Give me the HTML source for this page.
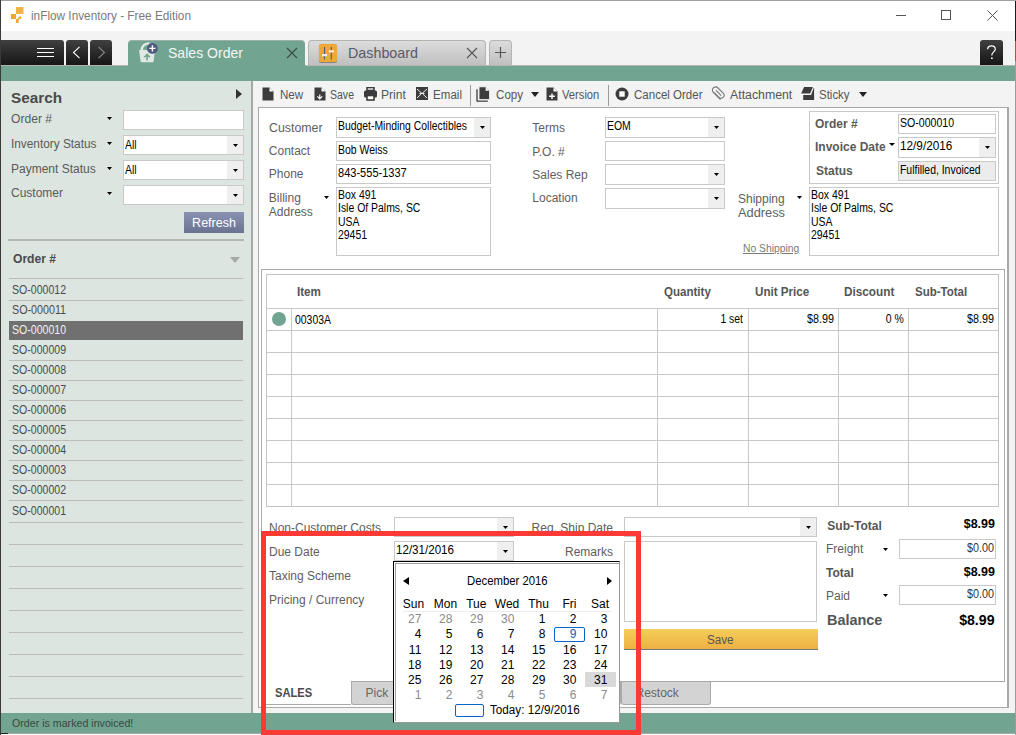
<!DOCTYPE html>
<html><head><meta charset="utf-8"><style>
html,body{margin:0;padding:0;}
body{width:1016px;height:735px;position:relative;overflow:hidden;background:#f3f3f3;font-family:"Liberation Sans", sans-serif;}
body>div,body>span,body>svg{position:absolute;}
span{white-space:nowrap;display:block;}
</style></head><body>
<div style="left:0px;top:0px;width:1016px;height:31px;background:#fff;"></div>
<div style="left:0px;top:0px;width:1016px;height:1px;background:#a0a0a0;"></div>
<svg style="left:10px;top:6px;" width="16" height="18" viewBox="0 0 16 18"><rect x="6" y="1" width="7.5" height="7" fill="#f2b446"/><rect x="1" y="8" width="5" height="5" fill="#eea533"/><rect x="6" y="13" width="2.6" height="4" fill="#eea533"/><path d="M6 8.5 L6 13 L8.6 13 L10.5 11" stroke="#eea533" stroke-width="0" fill="none"/><circle cx="10" cy="11.5" r="1.3" fill="#eea533"/><path d="M7.3 14 L10 11.5" stroke="#eea533" stroke-width="1.6"/></svg>
<span id="t0" style="left:31px;top:9.84px;font-size:12px;line-height:12px;color:#7a7a7a;font-weight:400;transform:scale(0.983,1.000);transform-origin:left center;">inFlow Inventory - Free Edition</span>
<div style="left:896px;top:15px;width:10px;height:1px;background:#555;"></div>
<div style="left:941px;top:10px;width:10px;height:10px;border:1px solid #555;box-sizing:border-box;"></div>
<svg style="left:987px;top:10px;" width="11" height="11" viewBox="0 0 11 11"><path d="M0.5 0.5L10.5 10.5M10.5 0.5L0.5 10.5" stroke="#555" stroke-width="1"/></svg>
<div style="left:0px;top:31px;width:1016px;height:35px;background:#f3f3f3;"></div>
<div style="left:1px;top:40px;width:63px;height:25px;background:linear-gradient(#404040,#2a2a2a 50%,#161616);border-radius:0 3px 0 0;"></div>
<div style="left:66px;top:40px;width:22px;height:25px;background:linear-gradient(#404040,#2a2a2a 50%,#161616);border-radius:3px 3px 0 0;"></div>
<div style="left:90px;top:40px;width:22px;height:25px;background:linear-gradient(#404040,#2a2a2a 50%,#161616);border-radius:3px 3px 0 0;"></div>
<div style="left:37px;top:48px;width:17px;height:1.4px;background:#fff;"></div>
<div style="left:37px;top:52px;width:17px;height:1.4px;background:#fff;"></div>
<div style="left:37px;top:56px;width:17px;height:1.4px;background:#fff;"></div>
<svg style="left:72px;top:46px;" width="9" height="13" viewBox="0 0 9 13"><path d="M7.5 0.8L1.5 6.5L7.5 12.2" stroke="#fff" stroke-width="1.1" fill="none"/></svg>
<svg style="left:97px;top:46px;" width="9" height="13" viewBox="0 0 9 13"><path d="M1.5 0.8L7.5 6.5L1.5 12.2" stroke="#8a8a8a" stroke-width="1.1" fill="none"/></svg>
<div style="left:980px;top:40px;width:23px;height:25px;background:linear-gradient(#404040,#2a2a2a 50%,#161616);border-radius:3px 3px 0 0;"></div>
<svg style="left:986px;top:45px;" width="11" height="15" viewBox="0 0 11 15"><path d="M1.6 4.2C1.6 2.2 3.3 0.8 5.4 0.8C7.6 0.8 9.3 2.2 9.3 4.2C9.3 6.6 5.9 7.2 5.9 9.8V10.6" stroke="#fff" stroke-width="1.2" fill="none"/><circle cx="5.9" cy="13.2" r="0.9" fill="#fff"/></svg>
<div style="left:0px;top:65px;width:1016px;height:1px;background:#b4b4b4;"></div>
<div style="left:0px;top:66px;width:1016px;height:15px;background:#71a591;"></div>
<div style="left:128px;top:40px;width:177px;height:26px;background:#71a591;border-radius:4px 4px 0 0;border-top:1px solid #9fb0a8;box-sizing:border-box;"></div>
<svg style="left:138px;top:42px;" width="24" height="22" viewBox="0 0 24 22"><path d="M3.6 8.5C3.8 3.5 7.5 1.2 11.5 1.6" stroke="#dfe8e2" stroke-width="2.4" fill="none"/>
<path d="M1 8 H17.2 L15.6 19.2 Q15.4 20.2 14.4 20.2 H3.8 Q2.8 20.2 2.6 19.2 Z" fill="#dfe8e2"/>
<path d="M9.1 18.2V12.6 M6.4 15.2 L9.1 12.4 L11.8 15.2" stroke="#71a591" stroke-width="1.6" fill="none"/>
<circle cx="14.4" cy="6.4" r="5.4" fill="#4f5a80"/>
<path d="M14.4 3.3V9.5 M11.3 6.4H17.5" stroke="#fff" stroke-width="1.4"/></svg>
<span id="t1" style="left:168px;top:45.00px;font-size:15px;line-height:15px;color:#f4f7f5;font-weight:400;transform:scale(0.937,1.000);transform-origin:left center;">Sales Order</span>
<svg style="left:286px;top:47px;" width="12" height="12" viewBox="0 0 12 12"><path d="M1 1L11 11M11 1L1 11" stroke="#3d4a44" stroke-width="1.1"/></svg>
<div style="left:308px;top:40px;width:178px;height:25px;background:linear-gradient(#dcdcdc,#c0c0c0);border:1px solid #b4b4b4;border-bottom:none;box-sizing:border-box;border-radius:4px 4px 0 0;"></div>
<div style="left:319px;top:44px;width:18px;height:18px;background:#efa838;border-radius:2.5px;box-shadow:0 0.6px 0.8px rgba(0,0,0,0.35);"></div>
<svg style="left:319px;top:44px;" width="18" height="18" viewBox="0 0 18 18"><path d="M5.5 3V15.6M12.3 3V15.6" stroke="#4d5b7e" stroke-width="1.1"/><rect x="3" y="10" width="5.2" height="2.2" rx="0.6" fill="#f7f0de"/><rect x="9.8" y="6.2" width="5.2" height="2.2" rx="0.6" fill="#f7f0de"/></svg>
<span id="t2" style="left:348px;top:45.30px;font-size:15px;line-height:15px;color:#5a5a66;font-weight:400;transform:scale(0.954,1.000);transform-origin:left center;">Dashboard</span>
<svg style="left:466px;top:47px;" width="12" height="12" viewBox="0 0 12 12"><path d="M1 1L11 11M11 1L1 11" stroke="#555" stroke-width="1.1"/></svg>
<div style="left:489px;top:40px;width:23px;height:25px;background:linear-gradient(#dcdcdc,#c0c0c0);border:1px solid #b4b4b4;border-bottom:none;box-sizing:border-box;border-radius:4px 4px 0 0;"></div>
<svg style="left:494px;top:46px;" width="13" height="13" viewBox="0 0 13 13"><path d="M6.5 1V12M1 6.5H12" stroke="#555" stroke-width="1.2"/></svg>
<div style="left:0px;top:81px;width:252px;height:632px;background:#dce5df;"></div>
<div style="left:251px;top:81px;width:2px;height:632px;background:#a4a8a6;"></div>
<span id="t3" style="left:11px;top:89.90px;font-size:15px;line-height:15px;color:#4a4a4a;font-weight:700;transform:scale(1.019,1.000);transform-origin:left center;">Search</span>
<svg style="left:236px;top:89px;" width="6" height="10" viewBox="0 0 6 10"><path d="M0 0L6 5L0 10Z" fill="#333"/></svg>
<span id="t4" style="left:11px;top:112.84px;font-size:12px;line-height:12px;color:#5a5a5a;font-weight:400;transform:scale(1.008,1.000);transform-origin:left center;">Order #</span>
<svg style="left:107.0px;top:117px;" width="5" height="3" viewBox="0 0 5 3"><path d="M0 0H5L2.5 3Z" fill="#000"/></svg>
<span id="t5" style="left:11px;top:137.84px;font-size:12px;line-height:12px;color:#5a5a5a;font-weight:400;transform:scale(0.985,1.000);transform-origin:left center;">Inventory Status</span>
<svg style="left:107.0px;top:142px;" width="5" height="3" viewBox="0 0 5 3"><path d="M0 0H5L2.5 3Z" fill="#000"/></svg>
<span id="t6" style="left:11px;top:162.84px;font-size:12px;line-height:12px;color:#5a5a5a;font-weight:400;">Payment Status</span>
<svg style="left:107.0px;top:167px;" width="5" height="3" viewBox="0 0 5 3"><path d="M0 0H5L2.5 3Z" fill="#000"/></svg>
<span id="t7" style="left:11px;top:187.44px;font-size:12px;line-height:12px;color:#5a5a5a;font-weight:400;">Customer</span>
<svg style="left:107.0px;top:191.6px;" width="5" height="3" viewBox="0 0 5 3"><path d="M0 0H5L2.5 3Z" fill="#000"/></svg>
<div style="left:123px;top:110px;width:121px;height:20px;background:#fff;border:1px solid #c9c9c9;box-sizing:border-box;"></div>
<div style="left:123px;top:135px;width:121px;height:20px;background:#fff;border:1px solid #c9c9c9;box-sizing:border-box;"></div>
<div style="left:227px;top:136px;width:16px;height:18px;background:#efefef;"></div>
<svg style="left:233.0px;top:143.5px;" width="5" height="3" viewBox="0 0 5 3"><path d="M0 0H5L2.5 3Z" fill="#000"/></svg>
<div style="left:123px;top:160px;width:121px;height:20px;background:#fff;border:1px solid #c9c9c9;box-sizing:border-box;"></div>
<div style="left:227px;top:161px;width:16px;height:18px;background:#efefef;"></div>
<svg style="left:233.0px;top:168.5px;" width="5" height="3" viewBox="0 0 5 3"><path d="M0 0H5L2.5 3Z" fill="#000"/></svg>
<div style="left:123px;top:185px;width:121px;height:20px;background:#fff;border:1px solid #c9c9c9;box-sizing:border-box;"></div>
<div style="left:227px;top:186px;width:16px;height:18px;background:#efefef;"></div>
<svg style="left:233.0px;top:193.5px;" width="5" height="3" viewBox="0 0 5 3"><path d="M0 0H5L2.5 3Z" fill="#000"/></svg>
<span id="t8" style="left:125px;top:139.34px;font-size:12px;line-height:12px;color:#000;font-weight:400;transform:scale(0.870,1.000);transform-origin:left center;">All</span>
<span id="t9" style="left:125px;top:164.34px;font-size:12px;line-height:12px;color:#000;font-weight:400;transform:scale(0.870,1.000);transform-origin:left center;">All</span>
<div style="left:184px;top:212px;width:60px;height:21px;background:linear-gradient(#8a93b3,#69728f);"></div>
<span id="t10" style="left:192.11px;top:216.92px;font-size:12.5px;line-height:12.5px;color:#fff;font-weight:400;transform-origin:left center;">Refresh</span>
<div style="left:8px;top:239px;width:236px;height:2px;background:#b5b9b6;"></div>
<span id="t11" style="left:13px;top:253.44px;font-size:12px;line-height:12px;color:#4a4a4a;font-weight:700;transform:scale(1.007,1.000);transform-origin:left center;">Order #</span>
<svg style="left:230px;top:257px;" width="10" height="6" viewBox="0 0 10 6"><path d="M0 0H10L5 6Z" fill="#a5a9a7"/></svg>
<div style="left:9px;top:278px;width:234px;height:1px;background:#bcbcba;"></div>
<span id="t12" style="left:12px;top:283.84px;font-size:12px;line-height:12px;color:#4a4a4a;font-weight:400;transform:scale(0.880,1.000);transform-origin:left center;">SO-000012</span>
<div style="left:9px;top:300px;width:234px;height:1px;background:#bcbcba;"></div>
<span id="t13" style="left:12px;top:303.84px;font-size:12px;line-height:12px;color:#4a4a4a;font-weight:400;transform:scale(0.893,1.000);transform-origin:left center;">SO-000011</span>
<div style="left:9px;top:321px;width:234px;height:19px;background:#707070;"></div>
<span id="t14" style="left:12px;top:323.84px;font-size:12px;line-height:12px;color:#f2f2f2;font-weight:400;transform:scale(0.880,1.000);transform-origin:left center;">SO-000010</span>
<span id="t15" style="left:12px;top:343.84px;font-size:12px;line-height:12px;color:#4a4a4a;font-weight:400;transform:scale(0.880,1.000);transform-origin:left center;">SO-000009</span>
<div style="left:9px;top:360px;width:234px;height:1px;background:#bcbcba;"></div>
<span id="t16" style="left:12px;top:363.84px;font-size:12px;line-height:12px;color:#4a4a4a;font-weight:400;transform:scale(0.880,1.000);transform-origin:left center;">SO-000008</span>
<div style="left:9px;top:380px;width:234px;height:1px;background:#bcbcba;"></div>
<span id="t17" style="left:12px;top:383.84px;font-size:12px;line-height:12px;color:#4a4a4a;font-weight:400;transform:scale(0.880,1.000);transform-origin:left center;">SO-000007</span>
<div style="left:9px;top:400px;width:234px;height:1px;background:#bcbcba;"></div>
<span id="t18" style="left:12px;top:403.84px;font-size:12px;line-height:12px;color:#4a4a4a;font-weight:400;transform:scale(0.880,1.000);transform-origin:left center;">SO-000006</span>
<div style="left:9px;top:420px;width:234px;height:1px;background:#bcbcba;"></div>
<span id="t19" style="left:12px;top:423.84px;font-size:12px;line-height:12px;color:#4a4a4a;font-weight:400;transform:scale(0.880,1.000);transform-origin:left center;">SO-000005</span>
<div style="left:9px;top:440px;width:234px;height:1px;background:#bcbcba;"></div>
<span id="t20" style="left:12px;top:443.84px;font-size:12px;line-height:12px;color:#4a4a4a;font-weight:400;transform:scale(0.880,1.000);transform-origin:left center;">SO-000004</span>
<div style="left:9px;top:460px;width:234px;height:1px;background:#bcbcba;"></div>
<span id="t21" style="left:12px;top:463.84px;font-size:12px;line-height:12px;color:#4a4a4a;font-weight:400;transform:scale(0.880,1.000);transform-origin:left center;">SO-000003</span>
<div style="left:9px;top:480px;width:234px;height:1px;background:#bcbcba;"></div>
<span id="t22" style="left:12px;top:483.84px;font-size:12px;line-height:12px;color:#4a4a4a;font-weight:400;transform:scale(0.880,1.000);transform-origin:left center;">SO-000002</span>
<div style="left:9px;top:500px;width:234px;height:1px;background:#bcbcba;"></div>
<span id="t23" style="left:12px;top:505.24px;font-size:12px;line-height:12px;color:#4a4a4a;font-weight:400;transform:scale(0.880,1.000);transform-origin:left center;">SO-000001</span>
<div style="left:9px;top:300px;width:234px;height:1px;background:#bcbcba;"></div>
<div style="left:9px;top:522px;width:234px;height:1px;background:#bcbcba;"></div>
<div style="left:9px;top:544px;width:234px;height:1px;background:#bcbcba;"></div>
<div style="left:9px;top:566px;width:234px;height:1px;background:#bcbcba;"></div>
<div style="left:9px;top:588px;width:234px;height:1px;background:#bcbcba;"></div>
<div style="left:9px;top:610px;width:234px;height:1px;background:#bcbcba;"></div>
<div style="left:9px;top:632px;width:234px;height:1px;background:#bcbcba;"></div>
<div style="left:9px;top:654px;width:234px;height:1px;background:#bcbcba;"></div>
<div style="left:9px;top:676px;width:234px;height:1px;background:#bcbcba;"></div>
<div style="left:9px;top:698px;width:234px;height:1px;background:#bcbcba;"></div>
<div style="left:0px;top:713px;width:1016px;height:20px;background:#71a591;"></div>
<div style="left:0px;top:733px;width:1016px;height:1px;background:#a8a8a8;"></div>
<div style="left:0px;top:733px;width:8px;height:1px;background:#222;"></div>
<div style="left:0px;top:734px;width:1016px;height:1px;background:#fdfdfd;"></div>
<span id="t24" style="left:11.5px;top:718.07px;font-size:11.5px;line-height:11.5px;color:#3b4843;font-weight:400;transform:scale(0.926,1.000);transform-origin:left center;">Order is marked invoiced!</span>
<div style="left:0px;top:0px;width:1px;height:735px;background:#3a3a3a;"></div>
<div style="left:1015px;top:0px;width:1px;height:735px;background:#9c9c9c;"></div>
<div style="left:1015px;top:1px;width:1px;height:40px;background:#1c1c1c;"></div>
<div style="left:1015px;top:41px;width:1px;height:20px;background:#a05a5a;"></div>
<svg style="left:261.5px;top:86.5px;" width="12" height="14" viewBox="0 0 12 14"><path d="M0.5 0.5H7.5L11.5 4.5V13.5H0.5Z" fill="#3c3c3c"/><path d="M7.5 0.5V4.5H11.5Z" fill="#fff"/></svg>
<span id="t25" style="left:279.7px;top:88.84px;font-size:12px;line-height:12px;color:#555555;font-weight:400;transform:scale(0.966,1.000);transform-origin:left center;">New</span>
<svg style="left:314px;top:87px;" width="12" height="14" viewBox="0 0 12 14"><path d="M0.5 0.5H7.5L11.5 4.5V13.5H0.5Z" fill="#3c3c3c"/><path d="M7.5 0.5V4.5H11.5Z" fill="#fff"/><path d="M5.8 7.5V11.8 M3.4 9.4L5.8 11.8L8.2 9.4" stroke="#fff" stroke-width="1.2" fill="none"/></svg>
<span id="t26" style="left:330px;top:88.84px;font-size:12px;line-height:12px;color:#555555;font-weight:400;transform:scale(0.877,1.000);transform-origin:left center;">Save</span>
<svg style="left:364px;top:87px;" width="13" height="14" viewBox="0 0 13 14"><rect x="3" y="0.5" width="7" height="3" fill="none" stroke="#3c3c3c" stroke-width="1.6"/><rect x="0" y="3.5" width="13" height="7" rx="1.5" fill="#3c3c3c"/><rect x="3" y="8.5" width="7" height="4.5" fill="#fff" stroke="#3c3c3c" stroke-width="1.6"/></svg>
<span id="t27" style="left:380.8px;top:88.84px;font-size:12px;line-height:12px;color:#555555;font-weight:400;transform:scale(1.009,1.000);transform-origin:left center;">Print</span>
<svg style="left:416px;top:87px;" width="12" height="13" viewBox="0 0 12 13"><rect x="0" y="0" width="12" height="13" fill="#3c3c3c"/><path d="M1 2L6 6.5L11 2M1 11L5 7.2M11 11L7 7.2" stroke="#fff" stroke-width="0.9" fill="none"/><path d="M3.5 6.5H8.5" stroke="#fff" stroke-width="0.9"/></svg>
<span id="t28" style="left:433px;top:88.84px;font-size:12px;line-height:12px;color:#555555;font-weight:400;transform:scale(0.966,1.000);transform-origin:left center;">Email</span>
<div style="left:470px;top:85px;width:1px;height:21px;background:#9a9a9a;"></div>
<svg style="left:476px;top:86px;" width="15" height="16" viewBox="0 0 15 16"><path d="M1 3.2V15.1H11.8" stroke="#3c3c3c" stroke-width="1.3" fill="none"/><path d="M3 0.8H9.6L13.6 4.8V13.6H3Z" fill="#3c3c3c" stroke="#f3f3f3" stroke-width="0.9"/><path d="M9.6 1.2V4.8H13.2Z" fill="#fff"/></svg>
<span id="t29" style="left:495.6px;top:88.84px;font-size:12px;line-height:12px;color:#555555;font-weight:400;transform:scale(0.967,1.000);transform-origin:left center;">Copy</span>
<svg style="left:531px;top:92px;" width="8" height="5" viewBox="0 0 8 5"><path d="M0 0H8L4 5Z" fill="#222"/></svg>
<svg style="left:546px;top:87px;" width="12" height="14" viewBox="0 0 12 14"><path d="M0.5 0.5H7.5L11.5 4.5V13.5H0.5Z" fill="#3c3c3c"/><path d="M7.5 0.5V4.5H11.5Z" fill="#fff"/><path d="M6 6.5V12 M3.2 9.2H8.8" stroke="#fff" stroke-width="1.4"/></svg>
<span id="t30" style="left:562.4px;top:88.84px;font-size:12px;line-height:12px;color:#555555;font-weight:400;transform:scale(0.932,1.000);transform-origin:left center;">Version</span>
<div style="left:608px;top:85px;width:1px;height:21px;background:#9a9a9a;"></div>
<svg style="left:615px;top:87px;" width="14" height="14" viewBox="0 0 14 14"><circle cx="7" cy="7" r="6.5" fill="#3c3c3c"/><rect x="4.3" y="4.3" width="5.4" height="5.4" fill="#fff"/></svg>
<span id="t31" style="left:633.7px;top:88.84px;font-size:12px;line-height:12px;color:#555555;font-weight:400;transform:scale(0.960,1.000);transform-origin:left center;">Cancel Order</span>
<svg style="left:710px;top:86px;transform:scaleX(-1);" width="15" height="15" viewBox="0 0 15 15"><path d="M4.5 13.5L11.5 6.5C13 5 13 3 11.5 1.8C10 0.6 8.2 0.8 7 2L1.8 7.2C0.6 8.4 0.6 10.2 1.8 11.4C3 12.6 4.8 12.6 6 11.4L11 6.4M9 4.4L3.8 9.6" stroke="#777" stroke-width="1.1" fill="none"/></svg>
<span id="t32" style="left:729.6px;top:88.84px;font-size:12px;line-height:12px;color:#555555;font-weight:400;transform:scale(1.026,1.000);transform-origin:left center;">Attachment</span>
<svg style="left:801px;top:87px;" width="14" height="14" viewBox="0 0 14 14"><path d="M3.1 0.1H11.9L9.1 6.5H0.1Z" fill="#3c3c3c"/><path d="M2.2 8H10.1L12.7 0.9H13.1V12.9H2.2Z" fill="#3c3c3c"/></svg>
<span id="t33" style="left:819px;top:88.84px;font-size:12px;line-height:12px;color:#555555;font-weight:400;transform:scale(0.956,1.000);transform-origin:left center;">Sticky</span>
<svg style="left:859px;top:92px;" width="8" height="5" viewBox="0 0 8 5"><path d="M0 0H8L4 5Z" fill="#222"/></svg>
<div style="left:258px;top:107px;width:751px;height:601px;background:#fff;border:1px solid #a9a9a9;border-right-width:2px;box-sizing:border-box;"></div>
<span id="t34" style="left:268.8px;top:121.84px;font-size:12px;line-height:12px;color:#5e5e5e;font-weight:400;transform:scale(1.030,1.000);transform-origin:left center;">Customer</span>
<span id="t35" style="left:268.8px;top:145.44px;font-size:12px;line-height:12px;color:#5e5e5e;font-weight:400;">Contact</span>
<span id="t36" style="left:268.8px;top:168.34px;font-size:12px;line-height:12px;color:#5e5e5e;font-weight:400;">Phone</span>
<span id="t37" style="left:268.8px;top:191.84px;font-size:12px;line-height:12px;color:#5e5e5e;font-weight:400;">Billing</span>
<span id="t38" style="left:268.8px;top:206.24px;font-size:12px;line-height:12px;color:#5e5e5e;font-weight:400;">Address</span>
<svg style="left:324.0px;top:195.5px;" width="5" height="3" viewBox="0 0 5 3"><path d="M0 0H5L2.5 3Z" fill="#000"/></svg>
<div style="left:336px;top:117px;width:155px;height:21px;background:#fff;border:1px solid #c9c9c9;box-sizing:border-box;"></div>
<div style="left:474px;top:118px;width:16px;height:19px;background:#efefef;"></div>
<svg style="left:480.0px;top:125.5px;" width="5" height="3" viewBox="0 0 5 3"><path d="M0 0H5L2.5 3Z" fill="#000"/></svg>
<span id="t39" style="left:338.2px;top:120.14px;font-size:12px;line-height:12px;color:#000;font-weight:400;transform:scale(0.867,1.000);transform-origin:left center;">Budget-Minding Collectibles</span>
<div style="left:336px;top:141px;width:155px;height:20px;background:#fff;border:1px solid #c9c9c9;box-sizing:border-box;"></div>
<span id="t40" style="left:338.2px;top:144.14px;font-size:12px;line-height:12px;color:#000;font-weight:400;transform:scale(0.870,1.000);transform-origin:left center;">Bob Weiss</span>
<div style="left:336px;top:164px;width:155px;height:20px;background:#fff;border:1px solid #c9c9c9;box-sizing:border-box;"></div>
<span id="t41" style="left:338.2px;top:167.14px;font-size:12px;line-height:12px;color:#000;font-weight:400;transform:scale(0.920,1.000);transform-origin:left center;">843-555-1337</span>
<div style="left:336px;top:187px;width:155px;height:69px;background:#fff;border:1px solid #c9c9c9;box-sizing:border-box;"></div>
<span id="t42" style="left:338.2px;top:189.34px;font-size:12px;line-height:12px;color:#000;font-weight:400;transform:scale(0.870,1.000);transform-origin:left center;">Box 491</span>
<span id="t43" style="left:338.2px;top:202.44px;font-size:12px;line-height:12px;color:#000;font-weight:400;transform:scale(0.870,1.000);transform-origin:left center;">Isle Of Palms, SC</span>
<span id="t44" style="left:338.2px;top:215.54px;font-size:12px;line-height:12px;color:#000;font-weight:400;transform:scale(0.870,1.000);transform-origin:left center;">USA</span>
<span id="t45" style="left:338.2px;top:228.64px;font-size:12px;line-height:12px;color:#000;font-weight:400;transform:scale(0.870,1.000);transform-origin:left center;">29451</span>
<span id="t46" style="left:532.3px;top:121.84px;font-size:12px;line-height:12px;color:#5e5e5e;font-weight:400;">Terms</span>
<span id="t47" style="left:532.3px;top:145.74px;font-size:12px;line-height:12px;color:#5e5e5e;font-weight:400;">P.O. #</span>
<span id="t48" style="left:532.3px;top:168.84px;font-size:12px;line-height:12px;color:#5e5e5e;font-weight:400;">Sales Rep</span>
<span id="t49" style="left:532.3px;top:191.64px;font-size:12px;line-height:12px;color:#5e5e5e;font-weight:400;">Location</span>
<div style="left:605px;top:117px;width:120px;height:21px;background:#fff;border:1px solid #c9c9c9;box-sizing:border-box;"></div>
<div style="left:708px;top:118px;width:16px;height:19px;background:#efefef;"></div>
<svg style="left:714.0px;top:125.5px;" width="5" height="3" viewBox="0 0 5 3"><path d="M0 0H5L2.5 3Z" fill="#000"/></svg>
<span id="t50" style="left:607px;top:120.14px;font-size:12px;line-height:12px;color:#000;font-weight:400;transform:scale(0.870,1.000);transform-origin:left center;">EOM</span>
<div style="left:605px;top:141px;width:120px;height:20px;background:#fff;border:1px solid #c9c9c9;box-sizing:border-box;"></div>
<div style="left:605px;top:164px;width:120px;height:21px;background:#fff;border:1px solid #c9c9c9;box-sizing:border-box;"></div>
<div style="left:708px;top:165px;width:16px;height:19px;background:#efefef;"></div>
<svg style="left:714.0px;top:172.5px;" width="5" height="3" viewBox="0 0 5 3"><path d="M0 0H5L2.5 3Z" fill="#000"/></svg>
<div style="left:605px;top:188px;width:120px;height:21px;background:#fff;border:1px solid #c9c9c9;box-sizing:border-box;"></div>
<div style="left:708px;top:189px;width:16px;height:19px;background:#efefef;"></div>
<svg style="left:714.0px;top:196.5px;" width="5" height="3" viewBox="0 0 5 3"><path d="M0 0H5L2.5 3Z" fill="#000"/></svg>
<div style="left:809px;top:111px;width:190px;height:73px;border:1px solid #c9c9c9;box-sizing:border-box;"></div>
<span id="t51" style="left:815px;top:118.24px;font-size:12px;line-height:12px;color:#5a5a5a;font-weight:700;">Order #</span>
<span id="t52" style="left:815px;top:141.34px;font-size:12px;line-height:12px;color:#5a5a5a;font-weight:700;">Invoice Date</span>
<svg style="left:889px;top:143px;" width="6" height="3" viewBox="0 0 6 3"><path d="M0 0H6L3 3Z" fill="#000"/></svg>
<span id="t53" style="left:816px;top:165.24px;font-size:12px;line-height:12px;color:#5a5a5a;font-weight:700;">Status</span>
<div style="left:898px;top:114px;width:98px;height:20px;background:#fff;border:1px solid #c9c9c9;box-sizing:border-box;"></div>
<span id="t54" style="left:900px;top:117.34px;font-size:12px;line-height:12px;color:#000;font-weight:400;transform:scale(0.880,1.000);transform-origin:left center;">SO-000010</span>
<div style="left:898px;top:137px;width:98px;height:21px;background:#fff;border:1px solid #c9c9c9;box-sizing:border-box;"></div>
<div style="left:979px;top:138px;width:16px;height:19px;background:#efefef;"></div>
<svg style="left:985.0px;top:145.5px;" width="5" height="3" viewBox="0 0 5 3"><path d="M0 0H5L2.5 3Z" fill="#000"/></svg>
<span id="t55" style="left:900px;top:140.34px;font-size:12px;line-height:12px;color:#000;font-weight:400;transform:scale(0.981,1.000);transform-origin:left center;">12/9/2016</span>
<div style="left:898px;top:161px;width:98px;height:20px;background:#ececec;border:1px solid #c9c9c9;box-sizing:border-box;"></div>
<span id="t56" style="left:900px;top:164.14px;font-size:12px;line-height:12px;color:#000;font-weight:400;transform:scale(0.869,1.000);transform-origin:left center;">Fulfilled, Invoiced</span>
<span id="t57" style="left:738px;top:192.54px;font-size:12px;line-height:12px;color:#5e5e5e;font-weight:400;">Shipping</span>
<span id="t58" style="left:738px;top:206.74px;font-size:12px;line-height:12px;color:#5e5e5e;font-weight:400;transform:scale(1.067,1.000);transform-origin:left center;">Address</span>
<svg style="left:797.0px;top:195.5px;" width="5" height="3" viewBox="0 0 5 3"><path d="M0 0H5L2.5 3Z" fill="#000"/></svg>
<span id="t59" style="left:743.2px;top:242.69px;font-size:11px;line-height:11px;color:#7a7a7a;font-weight:400;transform:scale(0.939,1.000);transform-origin:left center;text-decoration:underline;">No Shipping</span>
<div style="left:809px;top:187px;width:190px;height:69px;background:#fff;border:1px solid #c9c9c9;box-sizing:border-box;"></div>
<span id="t60" style="left:811px;top:189.34px;font-size:12px;line-height:12px;color:#000;font-weight:400;transform:scale(0.870,1.000);transform-origin:left center;">Box 491</span>
<span id="t61" style="left:811px;top:202.44px;font-size:12px;line-height:12px;color:#000;font-weight:400;transform:scale(0.870,1.000);transform-origin:left center;">Isle Of Palms, SC</span>
<span id="t62" style="left:811px;top:215.54px;font-size:12px;line-height:12px;color:#000;font-weight:400;transform:scale(0.870,1.000);transform-origin:left center;">USA</span>
<span id="t63" style="left:811px;top:228.64px;font-size:12px;line-height:12px;color:#000;font-weight:400;transform:scale(0.870,1.000);transform-origin:left center;">29451</span>
<div style="left:261px;top:269px;width:744px;height:413px;border:1px solid #a9a9a9;border-bottom:none;box-sizing:border-box;"></div>
<div style="left:266px;top:274px;width:733px;height:233px;border:1px solid #c4c4c4;box-sizing:border-box;"></div>
<span id="t64" style="left:297.1px;top:285.54px;font-size:12px;line-height:12px;color:#555555;font-weight:700;transform:scale(0.972,1.000);transform-origin:left center;">Item</span>
<span id="t65" style="left:664.2px;top:285.54px;font-size:12px;line-height:12px;color:#555555;font-weight:700;transform:scale(0.962,1.000);transform-origin:left center;">Quantity</span>
<span id="t66" style="left:754.5px;top:285.54px;font-size:12px;line-height:12px;color:#555555;font-weight:700;transform:scale(0.969,1.000);transform-origin:left center;">Unit Price</span>
<span id="t67" style="left:844.2px;top:285.54px;font-size:12px;line-height:12px;color:#555555;font-weight:700;transform:scale(0.980,1.000);transform-origin:left center;">Discount</span>
<span id="t68" style="left:915px;top:285.54px;font-size:12px;line-height:12px;color:#555555;font-weight:700;transform:scale(0.959,1.000);transform-origin:left center;">Sub-Total</span>
<div style="left:267px;top:308px;width:731px;height:1px;background:#c8c8c8;"></div>
<div style="left:267px;top:330px;width:731px;height:1px;background:#c8c8c8;"></div>
<div style="left:267px;top:352px;width:731px;height:1px;background:#c8c8c8;"></div>
<div style="left:267px;top:374px;width:731px;height:1px;background:#c8c8c8;"></div>
<div style="left:267px;top:396px;width:731px;height:1px;background:#c8c8c8;"></div>
<div style="left:267px;top:418px;width:731px;height:1px;background:#c8c8c8;"></div>
<div style="left:267px;top:440px;width:731px;height:1px;background:#c8c8c8;"></div>
<div style="left:267px;top:462px;width:731px;height:1px;background:#c8c8c8;"></div>
<div style="left:267px;top:484px;width:731px;height:1px;background:#c8c8c8;"></div>
<div style="left:291px;top:308px;width:1px;height:198px;background:#c8c8c8;"></div>
<div style="left:657px;top:308px;width:1px;height:198px;background:#c8c8c8;"></div>
<div style="left:748px;top:308px;width:1px;height:198px;background:#c8c8c8;"></div>
<div style="left:838px;top:308px;width:1px;height:198px;background:#c8c8c8;"></div>
<div style="left:908px;top:308px;width:1px;height:198px;background:#c8c8c8;"></div>
<div style="left:272px;top:312px;width:14px;height:14px;background:#71a591;border-radius:50%;"></div>
<span id="t69" style="left:295.3px;top:314.04px;font-size:12px;line-height:12px;color:#000;font-weight:400;transform:scale(0.870,1.000);transform-origin:left center;">00303A</span>
<span id="t70" style="right:272.79999999999995px;top:313.44px;font-size:12px;line-height:12px;color:#000;font-weight:400;transform:scale(0.870,1.000);transform-origin:right center;">1 set</span>
<span id="t71" style="right:182.39999999999998px;top:313.44px;font-size:12px;line-height:12px;color:#000;font-weight:400;transform:scale(0.900,1.000);transform-origin:right center;">$8.99</span>
<span id="t72" style="right:112px;top:313.44px;font-size:12px;line-height:12px;color:#000;font-weight:400;transform:scale(0.870,1.000);transform-origin:right center;">0 %</span>
<span id="t73" style="right:22.299999999999955px;top:313.44px;font-size:12px;line-height:12px;color:#000;font-weight:400;transform:scale(0.900,1.000);transform-origin:right center;">$8.99</span>
<span id="t74" style="left:269px;top:521.84px;font-size:12px;line-height:12px;color:#5e5e5e;font-weight:400;">Non-Customer Costs</span>
<div style="left:394px;top:517px;width:120px;height:20px;background:#fff;border:1px solid #c9c9c9;box-sizing:border-box;"></div>
<div style="left:497px;top:518px;width:16px;height:18px;background:#efefef;"></div>
<svg style="left:503.0px;top:525.5px;" width="5" height="3" viewBox="0 0 5 3"><path d="M0 0H5L2.5 3Z" fill="#000"/></svg>
<span id="t75" style="left:269px;top:545.94px;font-size:12px;line-height:12px;color:#5e5e5e;font-weight:400;">Due Date</span>
<div style="left:394px;top:541px;width:120px;height:20px;background:#fff;border:1px solid #c9c9c9;box-sizing:border-box;"></div>
<div style="left:497px;top:542px;width:16px;height:18px;background:#efefef;"></div>
<svg style="left:503.0px;top:549.5px;" width="5" height="3" viewBox="0 0 5 3"><path d="M0 0H5L2.5 3Z" fill="#000"/></svg>
<span id="t76" style="left:396px;top:544.34px;font-size:12px;line-height:12px;color:#000;font-weight:400;transform:scale(0.966,1.000);transform-origin:left center;">12/31/2016</span>
<span id="t77" style="left:269px;top:570.04px;font-size:12px;line-height:12px;color:#5e5e5e;font-weight:400;">Taxing Scheme</span>
<span id="t78" style="left:269px;top:594.04px;font-size:12px;line-height:12px;color:#5e5e5e;font-weight:400;">Pricing / Currency</span>
<span id="t79" style="right:403px;top:521.84px;font-size:12px;line-height:12px;color:#5e5e5e;font-weight:400;transform-origin:right center;">Req. Ship Date</span>
<span id="t80" style="right:403px;top:546.44px;font-size:12px;line-height:12px;color:#5e5e5e;font-weight:400;transform-origin:right center;">Remarks</span>
<div style="left:624px;top:517px;width:193px;height:20px;background:#fff;border:1px solid #c9c9c9;box-sizing:border-box;"></div>
<div style="left:800px;top:518px;width:16px;height:18px;background:#efefef;"></div>
<svg style="left:806.0px;top:525.5px;" width="5" height="3" viewBox="0 0 5 3"><path d="M0 0H5L2.5 3Z" fill="#000"/></svg>
<div style="left:624px;top:541px;width:193px;height:81px;background:#fff;border:1px solid #c9c9c9;box-sizing:border-box;"></div>
<div style="left:624px;top:629px;width:194px;height:21px;background:linear-gradient(#f4cd5a,#eeb142);border-bottom:1px solid #6f777c;box-sizing:border-box;"></div>
<span id="t81" style="left:706.80px;top:633.84px;font-size:12px;line-height:12px;color:#555;font-weight:400;transform:scale(0.972,1.000);transform-origin:left center;">Save</span>
<span id="t82" style="left:827.3px;top:519.84px;font-size:12px;line-height:12px;color:#555;font-weight:700;">Sub-Total</span>
<span id="t83" style="right:21px;top:518.42px;font-size:12.5px;line-height:12.5px;color:#000;font-weight:700;transform-origin:right center;">$8.99</span>
<span id="t84" style="left:826px;top:543.44px;font-size:12px;line-height:12px;color:#5e5e5e;font-weight:400;">Freight</span>
<svg style="left:883.0px;top:547.5px;" width="5" height="3" viewBox="0 0 5 3"><path d="M0 0H5L2.5 3Z" fill="#000"/></svg>
<div style="left:899px;top:539px;width:97px;height:20px;background:#fff;border:1px solid #c9c9c9;box-sizing:border-box;"></div>
<span id="t85" style="right:22px;top:541.84px;font-size:12px;line-height:12px;color:#333;font-weight:400;transform:scale(0.899,1.000);transform-origin:right center;">$0.00</span>
<span id="t86" style="left:826px;top:566.84px;font-size:12px;line-height:12px;color:#555;font-weight:700;">Total</span>
<span id="t87" style="right:21px;top:566.42px;font-size:12.5px;line-height:12.5px;color:#000;font-weight:700;transform-origin:right center;">$8.99</span>
<span id="t88" style="left:826px;top:589.84px;font-size:12px;line-height:12px;color:#5e5e5e;font-weight:400;">Paid</span>
<svg style="left:883.0px;top:593.5px;" width="5" height="3" viewBox="0 0 5 3"><path d="M0 0H5L2.5 3Z" fill="#000"/></svg>
<div style="left:899px;top:585px;width:97px;height:20px;background:#fff;border:1px solid #c9c9c9;box-sizing:border-box;"></div>
<span id="t89" style="right:22px;top:587.84px;font-size:12px;line-height:12px;color:#333;font-weight:400;transform:scale(0.899,1.000);transform-origin:right center;">$0.00</span>
<span id="t90" style="left:827px;top:611.80px;font-size:15px;line-height:15px;color:#555;font-weight:700;transform:scale(0.963,1.000);transform-origin:left center;">Balance</span>
<span id="t91" style="right:21px;top:611.80px;font-size:15px;line-height:15px;color:#000;font-weight:700;transform:scale(0.943,1.000);transform-origin:right center;">$8.99</span>
<div style="left:351px;top:681px;width:654px;height:1px;background:#a9a9a9;"></div>
<div style="left:351px;top:682px;width:90px;height:23px;background:#d3d3d3;border:1px solid #a9a9a9;border-top:none;border-radius:0 0 3px 3px;box-sizing:border-box;"></div>
<span id="t92" style="left:365.5px;top:686.84px;font-size:12px;line-height:12px;color:#666;font-weight:400;">Pick</span>
<div style="left:441px;top:682px;width:90px;height:23px;background:#d3d3d3;border:1px solid #a9a9a9;border-top:none;border-radius:0 0 3px 3px;box-sizing:border-box;"></div>
<span id="t93" style="left:455.5px;top:686.84px;font-size:12px;line-height:12px;color:#666;font-weight:400;">Pack</span>
<div style="left:531px;top:682px;width:90px;height:23px;background:#d3d3d3;border:1px solid #a9a9a9;border-top:none;border-radius:0 0 3px 3px;box-sizing:border-box;"></div>
<span id="t94" style="left:545.5px;top:686.84px;font-size:12px;line-height:12px;color:#666;font-weight:400;">Ship</span>
<div style="left:621px;top:682px;width:90px;height:23px;background:#d3d3d3;border:1px solid #a9a9a9;border-top:none;border-radius:0 0 3px 3px;box-sizing:border-box;"></div>
<span id="t95" style="left:635.5px;top:686.84px;font-size:12px;line-height:12px;color:#666;font-weight:400;">Restock</span>
<div style="left:261px;top:704px;width:90px;height:1px;background:#a9a9a9;"></div>
<span id="t96" style="left:275px;top:686.64px;font-size:12px;line-height:12px;color:#4a4a4a;font-weight:700;transform:scale(0.930,1.000);transform-origin:left center;">SALES</span>
<div style="left:393px;top:561px;width:227px;height:162px;background:#fff;border:1px solid #000;border-right-color:#999;border-bottom-color:#999;box-sizing:border-box;"></div>
<div style="left:395px;top:563px;width:224px;height:1px;background:#a0a0a0;"></div>
<div style="left:395px;top:563px;width:1px;height:158px;background:#a0a0a0;"></div>
<svg style="left:403px;top:577px;" width="6" height="8" viewBox="0 0 6 8"><path d="M6 0V8L0 4Z" fill="#000"/></svg>
<svg style="left:607px;top:577px;" width="5" height="8" viewBox="0 0 5 8"><path d="M0 0V8L5 4Z" fill="#000"/></svg>
<span id="t97" style="left:467.40px;top:575.44px;font-size:12px;line-height:12px;color:#000;font-weight:400;transform:scale(0.944,1.000);transform-origin:left center;">December 2016</span>
<span id="t98" style="left:402.82px;top:597.74px;font-size:12px;line-height:12px;color:#000;font-weight:400;transform-origin:left center;">Sun</span>
<span id="t99" style="left:433.73px;top:597.74px;font-size:12px;line-height:12px;color:#000;font-weight:400;transform-origin:left center;">Mon</span>
<span id="t100" style="left:466.18px;top:597.74px;font-size:12px;line-height:12px;color:#000;font-weight:400;transform-origin:left center;">Tue</span>
<span id="t101" style="left:494.77px;top:597.74px;font-size:12px;line-height:12px;color:#000;font-weight:400;transform-origin:left center;">Wed</span>
<span id="t102" style="left:528.16px;top:597.74px;font-size:12px;line-height:12px;color:#000;font-weight:400;transform-origin:left center;">Thu</span>
<span id="t103" style="left:562.50px;top:597.74px;font-size:12px;line-height:12px;color:#000;font-weight:400;transform-origin:left center;">Fri</span>
<span id="t104" style="left:590.99px;top:597.74px;font-size:12px;line-height:12px;color:#000;font-weight:400;transform-origin:left center;">Sat</span>
<div style="left:403px;top:611px;width:209px;height:1px;background:#ececec;"></div>
<div style="left:585px;top:672px;width:31px;height:15px;background:#d9d9d9;"></div>
<div style="left:554px;top:627px;width:31px;height:15px;border:1px solid #0a64c8;border-radius:2px;box-sizing:border-box;"></div>
<span id="t105" style="right:594.7px;top:613.14px;font-size:12px;line-height:12px;color:#8a8a8a;font-weight:400;transform-origin:right center;">27</span>
<span id="t106" style="right:563.7px;top:613.14px;font-size:12px;line-height:12px;color:#8a8a8a;font-weight:400;transform-origin:right center;">28</span>
<span id="t107" style="right:532.7px;top:613.14px;font-size:12px;line-height:12px;color:#8a8a8a;font-weight:400;transform-origin:right center;">29</span>
<span id="t108" style="right:501.70000000000005px;top:613.14px;font-size:12px;line-height:12px;color:#8a8a8a;font-weight:400;transform-origin:right center;">30</span>
<span id="t109" style="right:470.70000000000005px;top:613.14px;font-size:12px;line-height:12px;color:#000;font-weight:400;transform-origin:right center;">1</span>
<span id="t110" style="right:439.70000000000005px;top:613.14px;font-size:12px;line-height:12px;color:#000;font-weight:400;transform-origin:right center;">2</span>
<span id="t111" style="right:408.70000000000005px;top:613.14px;font-size:12px;line-height:12px;color:#000;font-weight:400;transform-origin:right center;">3</span>
<span id="t112" style="right:594.7px;top:628.14px;font-size:12px;line-height:12px;color:#000;font-weight:400;transform-origin:right center;">4</span>
<span id="t113" style="right:563.7px;top:628.14px;font-size:12px;line-height:12px;color:#000;font-weight:400;transform-origin:right center;">5</span>
<span id="t114" style="right:532.7px;top:628.14px;font-size:12px;line-height:12px;color:#000;font-weight:400;transform-origin:right center;">6</span>
<span id="t115" style="right:501.70000000000005px;top:628.14px;font-size:12px;line-height:12px;color:#000;font-weight:400;transform-origin:right center;">7</span>
<span id="t116" style="right:470.70000000000005px;top:628.14px;font-size:12px;line-height:12px;color:#000;font-weight:400;transform-origin:right center;">8</span>
<span id="t117" style="right:439.70000000000005px;top:628.14px;font-size:12px;line-height:12px;color:#1a5ab0;font-weight:400;transform-origin:right center;">9</span>
<span id="t118" style="right:408.70000000000005px;top:628.14px;font-size:12px;line-height:12px;color:#000;font-weight:400;transform-origin:right center;">10</span>
<span id="t119" style="right:594.7px;top:643.74px;font-size:12px;line-height:12px;color:#000;font-weight:400;transform-origin:right center;">11</span>
<span id="t120" style="right:563.7px;top:643.74px;font-size:12px;line-height:12px;color:#000;font-weight:400;transform-origin:right center;">12</span>
<span id="t121" style="right:532.7px;top:643.74px;font-size:12px;line-height:12px;color:#000;font-weight:400;transform-origin:right center;">13</span>
<span id="t122" style="right:501.70000000000005px;top:643.74px;font-size:12px;line-height:12px;color:#000;font-weight:400;transform-origin:right center;">14</span>
<span id="t123" style="right:470.70000000000005px;top:643.74px;font-size:12px;line-height:12px;color:#000;font-weight:400;transform-origin:right center;">15</span>
<span id="t124" style="right:439.70000000000005px;top:643.74px;font-size:12px;line-height:12px;color:#000;font-weight:400;transform-origin:right center;">16</span>
<span id="t125" style="right:408.70000000000005px;top:643.74px;font-size:12px;line-height:12px;color:#000;font-weight:400;transform-origin:right center;">17</span>
<span id="t126" style="right:594.7px;top:658.74px;font-size:12px;line-height:12px;color:#000;font-weight:400;transform-origin:right center;">18</span>
<span id="t127" style="right:563.7px;top:658.74px;font-size:12px;line-height:12px;color:#000;font-weight:400;transform-origin:right center;">19</span>
<span id="t128" style="right:532.7px;top:658.74px;font-size:12px;line-height:12px;color:#000;font-weight:400;transform-origin:right center;">20</span>
<span id="t129" style="right:501.70000000000005px;top:658.74px;font-size:12px;line-height:12px;color:#000;font-weight:400;transform-origin:right center;">21</span>
<span id="t130" style="right:470.70000000000005px;top:658.74px;font-size:12px;line-height:12px;color:#000;font-weight:400;transform-origin:right center;">22</span>
<span id="t131" style="right:439.70000000000005px;top:658.74px;font-size:12px;line-height:12px;color:#000;font-weight:400;transform-origin:right center;">23</span>
<span id="t132" style="right:408.70000000000005px;top:658.74px;font-size:12px;line-height:12px;color:#000;font-weight:400;transform-origin:right center;">24</span>
<span id="t133" style="right:594.7px;top:673.84px;font-size:12px;line-height:12px;color:#000;font-weight:400;transform-origin:right center;">25</span>
<span id="t134" style="right:563.7px;top:673.84px;font-size:12px;line-height:12px;color:#000;font-weight:400;transform-origin:right center;">26</span>
<span id="t135" style="right:532.7px;top:673.84px;font-size:12px;line-height:12px;color:#000;font-weight:400;transform-origin:right center;">27</span>
<span id="t136" style="right:501.70000000000005px;top:673.84px;font-size:12px;line-height:12px;color:#000;font-weight:400;transform-origin:right center;">28</span>
<span id="t137" style="right:470.70000000000005px;top:673.84px;font-size:12px;line-height:12px;color:#000;font-weight:400;transform-origin:right center;">29</span>
<span id="t138" style="right:439.70000000000005px;top:673.84px;font-size:12px;line-height:12px;color:#000;font-weight:400;transform-origin:right center;">30</span>
<span id="t139" style="right:408.70000000000005px;top:673.84px;font-size:12px;line-height:12px;color:#000;font-weight:400;transform-origin:right center;">31</span>
<span id="t140" style="right:594.7px;top:688.84px;font-size:12px;line-height:12px;color:#8a8a8a;font-weight:400;transform-origin:right center;">1</span>
<span id="t141" style="right:563.7px;top:688.84px;font-size:12px;line-height:12px;color:#8a8a8a;font-weight:400;transform-origin:right center;">2</span>
<span id="t142" style="right:532.7px;top:688.84px;font-size:12px;line-height:12px;color:#8a8a8a;font-weight:400;transform-origin:right center;">3</span>
<span id="t143" style="right:501.70000000000005px;top:688.84px;font-size:12px;line-height:12px;color:#8a8a8a;font-weight:400;transform-origin:right center;">4</span>
<span id="t144" style="right:470.70000000000005px;top:688.84px;font-size:12px;line-height:12px;color:#8a8a8a;font-weight:400;transform-origin:right center;">5</span>
<span id="t145" style="right:439.70000000000005px;top:688.84px;font-size:12px;line-height:12px;color:#8a8a8a;font-weight:400;transform-origin:right center;">6</span>
<span id="t146" style="right:408.70000000000005px;top:688.84px;font-size:12px;line-height:12px;color:#8a8a8a;font-weight:400;transform-origin:right center;">7</span>
<div style="left:455px;top:704px;width:29px;height:13px;border:1px solid #0a64c8;border-radius:2px;box-sizing:border-box;"></div>
<span id="t147" style="left:489.5px;top:704.34px;font-size:12px;line-height:12px;color:#000;font-weight:400;transform:scale(0.974,1.000);transform-origin:left center;">Today: 12/9/2016</span>
<div style="left:261px;top:531px;width:380px;height:204px;border:5px solid #fb3a36;box-sizing:border-box;"></div>
</body></html>
